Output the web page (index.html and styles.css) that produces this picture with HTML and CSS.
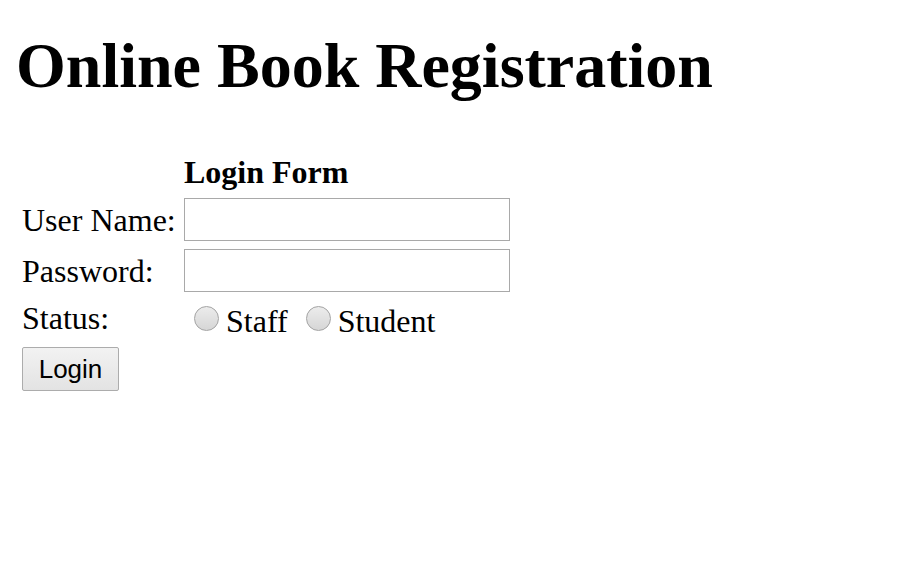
FILE: index.html
```html
<!DOCTYPE html>
<html>
<head>
<meta charset="utf-8">
<title>Online Book Registration</title>
<link rel="stylesheet" href="styles.css">
</head>
<body>
<h1 class="title">Online Book Registration</h1>
<form class="login">
  <div class="cell"></div>
  <div class="cell head">Login Form</div>

  <label class="cell label" for="user">User Name:</label>
  <div class="cell"><input class="field" id="user" type="text"></div>

  <label class="cell label" for="pass">Password:</label>
  <div class="cell"><input class="field" id="pass" type="password"></div>

  <div class="cell label top">Status:</div>
  <div class="cell radios">
    <span class="radio"></span><span class="opt">Staff</span>
    <span class="radio second"></span><span class="opt">Student</span>
  </div>

  <div class="cell span"><button class="btn" type="button">Login</button></div>
</form>
</body>
</html>
```
FILE: styles.css
```css
html, body {
  margin: 0;
  padding: 0;
  background: #ffffff;
}
body {
  font-family: "Liberation Serif", "Times New Roman", serif;
  color: #000;
}
.title {
  margin: 30px 0 0 16px;
  font-size: 64px;
  line-height: 72px;
  font-weight: bold;
}
.login {
  margin: 52px 0 0 22px;
  display: grid;
  grid-template-columns: 162px auto;
  row-gap: 8px;
  font-size: 32px;
  line-height: 36px;
}
.cell {
  display: flex;
  align-items: center;
}
.head {
  font-weight: bold;
  height: 36px;
}
.label.top {
  align-items: flex-start;
  height: 39px;
}
.field {
  box-sizing: border-box;
  width: 326px;
  height: 43px;
  margin: 0;
  border: 1px solid #a9a9a9;
  background: #fff;
  padding: 2px 4px;
  font-size: 26px;
}
.radios {
  align-items: flex-start;
  height: 39px;
}
.radio {
  box-sizing: border-box;
  display: block;
  width: 25px;
  height: 25px;
  margin: 6px 7px 0 10px;
  border: 1px solid #a3a3a3;
  border-radius: 50%;
  background: linear-gradient(#ececec, #d6d6d6);
}
.radio.second {
  margin-left: 18px;
}
.opt {
  margin-top: 3px;
}
.span {
  grid-column: 1 / 3;
}
.btn {
  box-sizing: border-box;
  width: 97px;
  height: 44px;
  margin: 0;
  padding: 0;
  border: 1px solid #acacac;
  border-radius: 2px;
  background: linear-gradient(#f2f2f2, #e3e3e3);
  font-family: "Liberation Sans", Arial, sans-serif;
  font-size: 26px;
  color: #000;
}
```
